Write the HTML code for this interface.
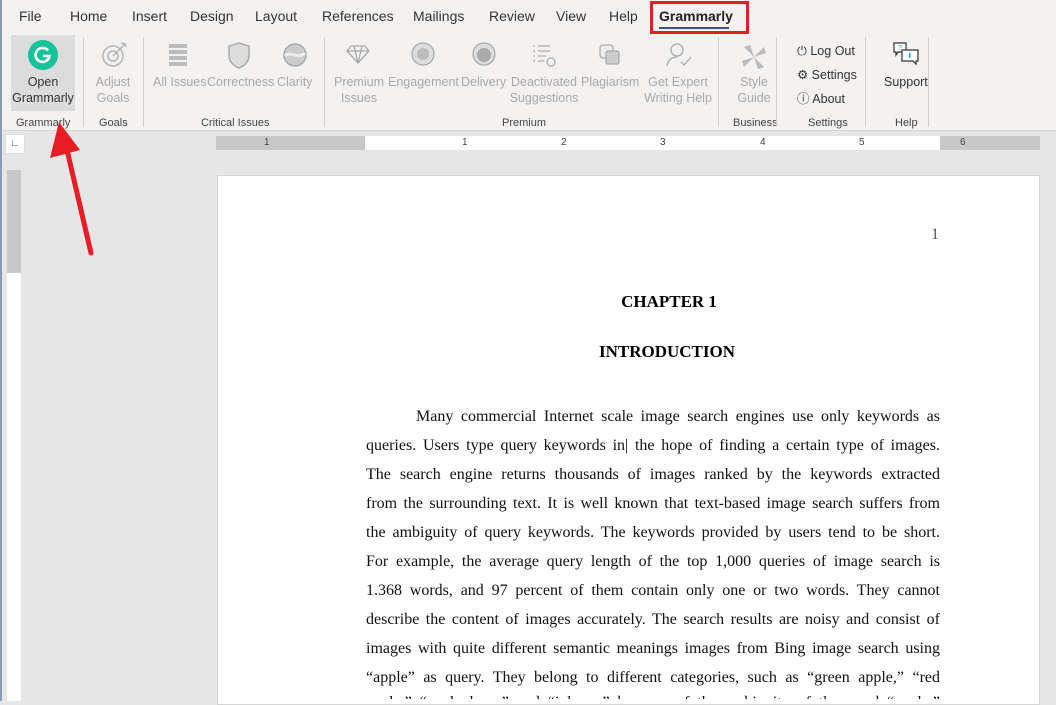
<!DOCTYPE html>
<html><head><meta charset="utf-8"><style>
*{margin:0;padding:0;box-sizing:border-box}
body{width:1056px;height:701px;overflow:hidden;background:#e6e6e6;font-family:"Liberation Sans",sans-serif;position:relative}
.a{position:absolute}
#rib{left:0;top:0;width:1056px;height:131px;background:#f3f2f1;border-bottom:1px solid #d6d6d6}
.tab{position:absolute;top:8px;font-size:14px;color:#333}
.lbl{position:absolute;font-size:12.5px;color:#a8a8a8;text-align:center;line-height:16px}
.g{position:absolute;top:117px;font-size:11px;color:#444}
.sep{position:absolute;top:37px;width:1px;height:90px;background:#d0d0d0}
.ln{position:absolute;left:366px;width:574px;font-family:"Liberation Serif",serif;font-size:16px;color:#111;text-align:justify;text-align-last:justify;white-space:nowrap;height:20px;overflow:hidden}
.ln span{white-space:normal}
</style></head><body>
<div id="rib" class="a"></div>
<div class="a" style="left:0;top:0;width:2px;height:701px;background:#8a9bb8;z-index:5"></div>
<div class="tab" style="left:19px">File</div>
<div class="tab" style="left:70px">Home</div>
<div class="tab" style="left:132px">Insert</div>
<div class="tab" style="left:190px">Design</div>
<div class="tab" style="left:255px">Layout</div>
<div class="tab" style="left:322px">References</div>
<div class="tab" style="left:413px">Mailings</div>
<div class="tab" style="left:489px">Review</div>
<div class="tab" style="left:556px">View</div>
<div class="tab" style="left:609px">Help</div>
<div class="tab" style="left:659px;font-weight:bold;color:#222">Grammarly</div>
<div class="a" style="left:659px;top:27px;width:70px;height:2px;background:#2b579a"></div>
<div class="a" style="left:650px;top:1px;width:99px;height:33px;border:3px solid #e81c24"></div>

<div class="a" style="left:11px;top:35px;width:64px;height:76px;background:#dcdcdc"></div>
<svg class="a" style="left:27px;top:39px" width="32" height="32"><circle cx="16" cy="16" r="15" fill="#15c39a"/><path d="M21 11.5A7 7 0 1 0 22.5 17H16" stroke="#fff" stroke-width="2.6" fill="none"/></svg>
<div class="lbl" style="left:8px;top:74px;width:70px;color:#333">Open<br>Grammarly</div>
<svg class="a" style="left:99px;top:40px" width="30" height="30" fill="none" stroke="#b5b5b5" stroke-width="1.5"><circle cx="14" cy="16" r="10"/><circle cx="14" cy="16" r="5"/><path d="M14 16L26 4M22 3l4 1 1 3"/></svg>
<div class="lbl" style="left:88px;top:74px;width:50px">Adjust<br>Goals</div>
<svg class="a" style="left:168px;top:42px" width="20" height="26" fill="#bbb"><rect x="1" y="2" width="18" height="4"/><rect x="1" y="8" width="18" height="4"/><rect x="1" y="14" width="18" height="4"/><rect x="1" y="20" width="18" height="4"/></svg>
<svg class="a" style="left:227px;top:41px" width="24" height="28"><path d="M12 2L22 5V14C22 21 17 25 12 27 7 25 2 21 2 14V5Z" fill="#ddd" stroke="#aaa" stroke-width="1.5"/></svg>
<svg class="a" style="left:282px;top:42px" width="26" height="26"><circle cx="13" cy="13" r="11" fill="#ccc" stroke="#aaa" stroke-width="1.5"/><path d="M3 14C8 8 16 18 23 11" stroke="#eee" stroke-width="3" fill="none"/></svg>
<div class="lbl" style="left:153px;top:74px">All Issues</div>
<div class="lbl" style="left:207px;top:74px">Correctness</div>
<div class="lbl" style="left:277px;top:74px">Clarity</div>
<svg class="a" style="left:346px;top:44px" width="24" height="20" fill="none" stroke="#aaa" stroke-width="1.3"><path d="M5 2H19L23 7 12 19 1 7ZM1 7H23M8 2L12 19 16 2"/></svg>
<svg class="a" style="left:411px;top:42px" width="24" height="24"><circle cx="12" cy="12" r="11" fill="#ddd" stroke="#aaa" stroke-width="1.3"/><circle cx="12" cy="12" r="6" fill="#bbb"/></svg>
<svg class="a" style="left:472px;top:42px" width="24" height="24"><circle cx="12" cy="12" r="11" fill="#ddd" stroke="#aaa" stroke-width="1.3"/><circle cx="12" cy="13" r="7" fill="#aaa"/></svg>
<svg class="a" style="left:532px;top:44px" width="26" height="24" stroke="#aaa" stroke-width="1.3" fill="none"><path d="M1 2H3M6 2H18M1 7H3M6 7H18M1 12H3M6 12H14M1 17H3M6 17H12"/><circle cx="19" cy="18" r="4"/></svg>
<svg class="a" style="left:598px;top:43px" width="24" height="24" stroke="#aaa" stroke-width="1.3"><rect x="2" y="2" width="13" height="13" rx="3" fill="#eee"/><rect x="8" y="8" width="13" height="13" rx="2" fill="#ccc"/></svg>
<svg class="a" style="left:665px;top:42px" width="30" height="28" stroke="#aaa" stroke-width="1.3" fill="none"><circle cx="12" cy="8" r="6"/><path d="M2 24C3 17 8 15 12 15M16 20l3 3 7-8"/></svg>
<div class="lbl" style="left:330px;top:74px;width:58px">Premium<br>Issues</div>
<div class="lbl" style="left:388px;top:74px">Engagement</div>
<div class="lbl" style="left:461px;top:74px">Delivery</div>
<div class="lbl" style="left:508px;top:74px;width:72px">Deactivated<br>Suggestions</div>
<div class="lbl" style="left:581px;top:74px">Plagiarism</div>
<div class="lbl" style="left:641px;top:74px;width:74px">Get Expert<br>Writing Help</div>
<svg class="a" style="left:741px;top:44px" width="26" height="26" fill="#bbb"><path d="M13 13L3 3 9 1ZM13 13L23 3 25 9ZM13 13L23 23 17 25ZM13 13L3 23 1 17Z"/></svg>
<div class="lbl" style="left:733px;top:74px;width:42px">Style<br>Guide</div>
<div class="a" style="left:797px;top:39px;font-size:12.5px;color:#333;line-height:24px">⏻ Log Out<br>⚙ Settings<br>ⓘ About</div>
<svg class="a" style="left:892px;top:41px" width="30" height="26" fill="#fff" stroke="#333" stroke-width="1.2"><path d="M2 2H14V11H6L4 14V11H2Z"/><path d="M10 9H26V20H24V23L21 20H10Z"/><text x="6" y="9" font-size="7" fill="#1ab" stroke="none">?</text><rect x="17" y="12" width="1.5" height="5" fill="#1ab" stroke="none"/></svg>
<div class="lbl" style="left:884px;top:74px;color:#333">Support</div>

<div class="g" style="left:16px">Grammarly</div>
<div class="g" style="left:99px">Goals</div>
<div class="g" style="left:201px">Critical Issues</div>
<div class="g" style="left:502px">Premium</div>
<div class="g" style="left:733px">Business</div>
<div class="g" style="left:808px">Settings</div>
<div class="g" style="left:895px">Help</div>
<div class="sep" style="left:83px"></div><div class="sep" style="left:143px"></div><div class="sep" style="left:324px"></div><div class="sep" style="left:718px"></div><div class="sep" style="left:776px"></div><div class="sep" style="left:865px"></div><div class="sep" style="left:928px"></div>

<div class="a" style="left:5px;top:134px;width:20px;height:20px;background:#fff;border:1px solid #ddd;font-size:10px;font-weight:bold;color:#555;text-align:center;line-height:18px">∟</div>
<div class="a" style="left:216px;top:136px;width:824px;height:14px;background:#c8c8c8"></div>
<div class="a" style="left:365px;top:136px;width:575px;height:14px;background:#fff"></div>
<div class="a" style="left:216px;top:136px;width:824px;height:14px;font-size:10px;color:#444;line-height:14px;letter-spacing:0">
<span class="a" style="left:48px">1</span><span class="a" style="left:246px">1</span><span class="a" style="left:345px">2</span><span class="a" style="left:444px">3</span><span class="a" style="left:544px">4</span><span class="a" style="left:643px">5</span><span class="a" style="left:744px">6</span></div>
<div class="a" style="left:7px;top:170px;width:14px;height:531px;background:#fff"></div>
<div class="a" style="left:7px;top:170px;width:14px;height:103px;background:#c8c8c8"></div>

<div class="a" style="left:217px;top:175px;width:823px;height:530px;background:#fff;border:1px solid #d4d4d4"></div>
<div class="a" style="left:931px;top:226px;font-family:'Liberation Serif',serif;font-size:16px;color:#555">1</div>
<div class="a" style="left:366px;top:292px;width:606px;text-align:center;font-family:'Liberation Serif',serif;font-size:17px;font-weight:bold">CHAPTER 1</div>
<div class="a" style="left:366px;top:342px;width:602px;text-align:center;font-family:'Liberation Serif',serif;font-size:17px;font-weight:bold">INTRODUCTION</div>

<div class="ln" style="top:408px;left:416px;width:524px"><span>Many commercial Internet scale image search engines use only keywords as</span></div>
<div class="ln" style="top:437px"><span>queries. Users type query keywords in| the hope of finding a certain type of images.</span></div>
<div class="ln" style="top:466px"><span>The search engine returns thousands of images ranked by the keywords extracted</span></div>
<div class="ln" style="top:495px"><span>from the surrounding text. It is well known that text-based image search suffers from</span></div>
<div class="ln" style="top:524px"><span>the ambiguity of query keywords. The keywords provided by users tend to be short.</span></div>
<div class="ln" style="top:553px"><span>For example, the average query length of the top 1,000 queries of image search is</span></div>
<div class="ln" style="top:582px"><span>1.368 words, and 97 percent of them contain only one or two words. They cannot</span></div>
<div class="ln" style="top:611px"><span>describe the content of images accurately. The search results are noisy and consist of</span></div>
<div class="ln" style="top:640px"><span>images with quite different semantic meanings images from Bing image search using</span></div>
<div class="ln" style="top:669px"><span>“apple” as query. They belong to different categories, such as “green apple,” “red</span></div>
<div class="ln" style="top:694px;height:5px"><span>apple,” “apple logo,” and “iphone,” because of the ambiguity of the word “apple.”</span></div>

<svg class="a" style="left:45px;top:110px" width="60" height="150"><path d="M46 143L22 40" stroke="#e81c24" stroke-width="5" stroke-linecap="round"/><path d="M14 12L5 48 35 40Z" fill="#e81c24"/></svg>
</body></html>
